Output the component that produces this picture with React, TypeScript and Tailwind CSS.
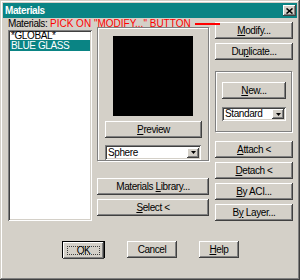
import type { ReactNode } from "react";

type BtnProps = {
    children: ReactNode;
    className?: string;
};

function Btn({ children, className = "" }: BtnProps) {
    return (
        <div
            className={`flex h-[17px] items-center justify-center bg-[#d4d0c8] text-[10px] leading-none tracking-[-0.4px] text-black shadow-[inset_-1px_-1px_#404040,inset_1px_1px_#ffffff,inset_-2px_-2px_#808080] ${className}`}>
            {children}
        </div>
    );
}

function Combo({ value, className = "" }: { value: string; className?: string }) {
    return (
        <div
            className={`flex items-center bg-white pl-[3px] pr-[2px] shadow-[inset_1px_1px_#808080,inset_-1px_-1px_#ffffff,inset_2px_2px_#404040,inset_-2px_-2px_#d4d0c8] ${className}`}>
            <span className="flex-1 text-[10px] leading-none tracking-[-0.4px] text-black">{value}</span>
            <div className="flex h-[10px] w-[12px] items-center justify-center bg-[#d4d0c8] shadow-[inset_-1px_-1px_#404040,inset_1px_1px_#ffffff,inset_-2px_-2px_#808080]">
                <svg width="5" height="3" viewBox="0 0 5 3">
                    <path d="M0 0h5L2.5 3z" fill="#000"/>
                </svg>
            </div>
        </div>
    );
}

export default function App() {
    return (
        <div
            className="relative h-[280px] w-[300px] bg-[#d4d0c8] p-[3px] font-['Liberation_Sans',Arial,sans-serif] shadow-[inset_-1px_-1px_#404040,inset_1px_1px_#d4d0c8,inset_-2px_-2px_#808080,inset_2px_2px_#ffffff]">
            {/* title bar */}
            <div className="flex h-[15px] items-center justify-between bg-[#0a8484] pl-[2px] pr-[1px]">
                <span className="text-[10px] font-bold leading-none tracking-[-0.4px] text-white">Materials</span>
                <div
                    className="flex h-[11px] w-[13px] items-center justify-center bg-[#d4d0c8] shadow-[inset_-1px_-1px_#404040,inset_1px_1px_#ffffff,inset_-2px_-2px_#808080]">
                    <svg width="7" height="6" viewBox="0 0 7 6">
                        <path d="M0.5 0.5l6 5M6.5 0.5l-6 5" stroke="#000" strokeWidth="1.6"/>
                    </svg>
                </div>
            </div>

            <div className="flex items-start pl-[5px]">
                {/* materials list */}
                <div className="flex w-[84px] flex-col">
                    <div className="h-[12px] text-[10px] leading-[12px] tracking-[-0.4px] text-black">Materials:</div>
                    <div
                        className="h-[191px] bg-white pt-px shadow-[inset_1px_1px_#808080,inset_-1px_-1px_#ffffff,inset_2px_2px_#404040,inset_-2px_-2px_#d4d0c8]">
                        <div className="h-[9px] pl-[3px] text-[10px] leading-[9px] tracking-[-0.4px] text-black">*GLOBAL*</div>
                        <div className="mx-[2px] h-[11px] bg-[#0a8484] pl-px text-[10px] leading-[11px] tracking-[-0.4px] text-white">BLUE GLASS</div>
                    </div>
                </div>

                {/* preview column */}
                <div className="ml-[5px] flex w-[112px] flex-col">
                    <div
                        className="mt-[9px] flex h-[134px] flex-col border border-[#808080] shadow-[inset_1px_1px_#ffffff,1px_1px_#ffffff]">
                        <div className="mx-auto mt-[8px] h-[80px] w-[80px] bg-black"/>
                        <Btn className="ml-[7px] mt-[5px] w-[97px]"><span><u>P</u>review</span></Btn>
                        <Combo value="Sphere" className="ml-[7px] mt-[7px] h-[15px] w-[96px]"/>
                    </div>
                    <Btn className="mt-[17px] w-[112px]"><span>Materials <u>L</u>ibrary...</span></Btn>
                    <Btn className="mt-[4px] w-[112px]"><span><u>S</u>elect &lt;</span></Btn>
                </div>

                {/* action buttons */}
                <div className="ml-[6px] flex w-[78px] flex-col">
                    <Btn className="mt-[4px]"><span><u>M</u>odify...</span></Btn>
                    <Btn className="mt-[4px]"><span>Du<u>p</u>licate...</span></Btn>
                    <div
                        className="mt-[11px] flex h-[61px] w-[77px] flex-col border border-[#808080] shadow-[inset_1px_1px_#ffffff,1px_1px_#ffffff]">
                        <Btn className="ml-[6px] mt-[10px] w-[64px]"><span><u>N</u>ew...</span></Btn>
                        <Combo value="Standard" className="ml-[6px] mt-[8px] h-[14px] w-[64px]"/>
                    </div>
                    <Btn className="mt-[9px]"><span><u>A</u>ttach &lt;</span></Btn>
                    <Btn className="mt-[4px]"><span><u>D</u>etach &lt;</span></Btn>
                    <Btn className="mt-[4px]"><span><u>B</u>y ACI...</span></Btn>
                    <Btn className="mt-[4px]"><span>B<u>y</u> Layer...</span></Btn>
                </div>
            </div>

            {/* dialog buttons */}
            <div className="mt-[20px] flex items-start pl-[59px]">
                <div className="h-[17px] w-[43px] border border-black">
                    <Btn className="h-[15px] w-[41px]">
                        <span className="flex h-[9px] w-[33px] items-center justify-center border border-dotted border-[#404040]">OK</span>
                    </Btn>
                </div>
                <Btn className="ml-[22px] w-[50px]"><span>Cancel</span></Btn>
                <Btn className="ml-[22px] w-[40px]"><span><u>H</u>elp</span></Btn>
            </div>

            {/* annotation */}
            <div className="absolute left-[50px] top-[19px] text-[10px] leading-[10px] text-[#ff0000]">
                PICK ON "MODIFY..." BUTTON
            </div>
            <div className="absolute left-[195px] top-[23px] h-[2px] w-[25px] bg-[#ff0000]"/>
        </div>
    );
}
